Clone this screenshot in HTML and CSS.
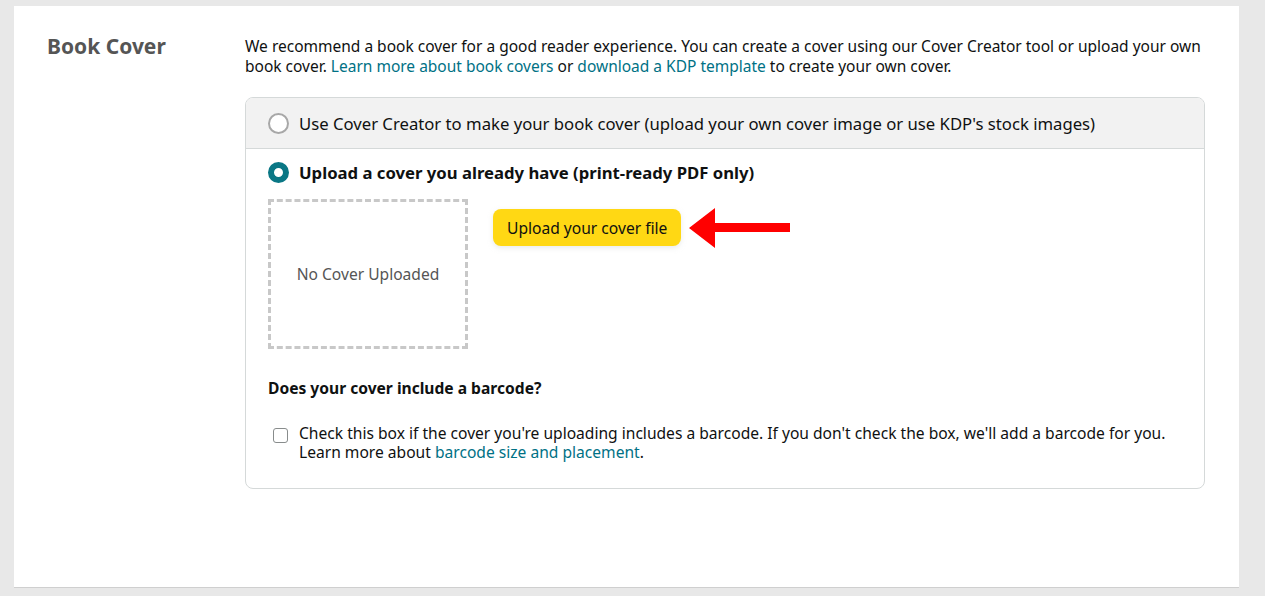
FILE: index.html
```html
<!DOCTYPE html>
<html>
<head>
<meta charset="utf-8">
<link rel="stylesheet" href="styles.css">
</head>
<body>
<div class="panel">
  <div class="label"><h2 class="title">Book Cover</h2></div>
  <div class="content">
    <p class="desc">We recommend a book cover for a good reader experience. You can create a cover using our Cover Creator tool or upload your own book cover. <a class="link">Learn more about book covers</a> or <a class="link">download a KDP template</a> to create your own cover.</p>
    <div class="box">
      <div class="opt opt-top">
        <span class="radio"></span>
        <span class="opt-text">Use Cover Creator to make your book cover (upload your own cover image or use KDP's stock images)</span>
      </div>
      <div class="opt-body">
        <div class="opt opt-sel">
          <span class="radio radio-on"></span>
          <span class="opt-text bold">Upload a cover you already have (print-ready PDF only)</span>
        </div>
        <div class="upload-row">
          <div class="cover-ph">No Cover Uploaded</div>
          <button class="btn">Upload your cover file</button>
          <svg class="arrow" width="102" height="40" viewBox="0 0 102 40">
            <polygon points="0,20 26,0 26,15 101,15 101,24 26,24 26,40" fill="#ff0000"/>
          </svg>
        </div>
        <h3 class="q">Does your cover include a barcode?</h3>
        <div class="check-row">
          <span class="checkbox"></span>
          <p class="check-text">Check this box if the cover you're uploading includes a barcode. If you don't check the box, we'll add a barcode for you.<br>Learn more about <a class="link">barcode size and placement</a>.</p>
        </div>
      </div>
    </div>
  </div>
</div>
</body>
</html>
```
FILE: styles.css
```css
* { box-sizing: border-box; }
body {
  margin: 0;
  background: #e8e8e8;
  font-family: "Noto Sans", "Open Sans", sans-serif;
  color: #0f1111;
}
.panel {
  margin: 6px 26px 0 14px;
  height: 582px;
  background: #fff;
  border-bottom: 1px solid #cfcfcf;
  display: flex;
  padding: 30px 34px 0 33px;
}
.label { width: 198px; flex: none; }
.title {
  margin: 0;
  font-size: 21px;
  line-height: 20px;
  font-weight: 700;
  color: #555;
}
.content { flex: 1; }
.desc {
  margin: 0 -6px 21px 0;
  font-size: 15.5px;
  line-height: 20px;
}
.link { color: #007185; text-decoration: none; }
.box {
  border: 1px solid #d5d9d9;
  border-radius: 8px;
  overflow: hidden;
}
.opt {
  display: flex;
  align-items: center;
  font-size: 16.7px;
}
.opt-top {
  background: #f2f2f2;
  height: 51px;
  padding-left: 22px;
  border-bottom: 1px solid #d5d9d9;
}
.radio {
  width: 21px;
  height: 21px;
  border-radius: 50%;
  border: 2px solid #a8a8a8;
  background: #fff;
  flex: none;
  margin-right: 10px;
}
.radio-on {
  border: 6px solid #0a7785;
  background: #fff;
}
.bold { font-weight: 700; }
.opt-body { padding: 13px 22px 26px 22px; }
.opt-sel { height: 21px; }
.upload-row {
  display: flex;
  align-items: flex-start;
  margin-top: 16px;
}
.cover-ph {
  width: 200px;
  height: 150px;
  border: 3px dashed #c8c8c8;
  display: flex;
  align-items: center;
  justify-content: center;
  font-size: 15.6px;
  color: #555;
}
.btn {
  margin-left: 25px;
  margin-top: 10px;
  height: 37px;
  padding: 0 14px;
  background: #ffd814;
  border: none;
  border-radius: 8px;
  font-family: inherit;
  font-size: 15.6px;
  color: #0f1111;
  box-shadow: 0 2px 5px rgba(213,217,217,0.5);
}
.arrow { margin-left: 8px; margin-top: 9px; }
.q {
  margin: 29px 0 0 0;
  font-size: 15.6px;
  line-height: 20px;
  font-weight: 700;
}
.check-row {
  display: flex;
  align-items: flex-start;
  margin-top: 26px;
}
.checkbox {
  width: 15px;
  height: 15px;
  border: 1px solid #888c8c;
  border-radius: 3px;
  margin: 4px 11px 0 5px;
  flex: none;
  background: #fff;
}
.check-text {
  margin: 0;
  font-size: 15.6px;
  line-height: 19px;
}
```
